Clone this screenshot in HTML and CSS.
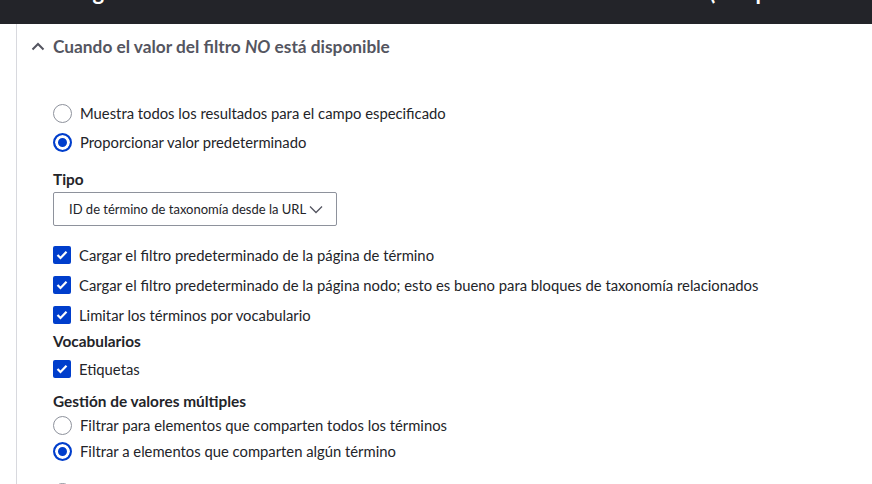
FILE: index.html
```html
<!DOCTYPE html>
<html lang="es">
<head>
<meta charset="utf-8">
<title>Filtro contextual</title>
<link rel="stylesheet" href="styles.css">
</head>
<body>
<header class="topbar">
  <div class="topbar-title">Configurar filtro contextual: Contenido: Tiene término de taxonomía (con profundidad) taxonomy_index_tid_depth (x)</div>
</header>
<main class="main">
  <section class="panel">
    <div class="summary">
      <svg class="chev-up" width="14" height="9" viewBox="0 0 14 9"><path d="M1.5 7.5 L7 2 L12.5 7.5" fill="none" stroke="#545560" stroke-width="2"/></svg>
      <span class="summary-text">Cuando el valor del filtro <em>NO</em> está disponible</span>
    </div>

    <div class="group radios-top">
      <label class="row"><span class="radio"></span><span>Muestra todos los resultados para el campo especificado</span></label>
      <label class="row"><span class="radio checked"></span><span>Proporcionar valor predeterminado</span></label>
    </div>

    <div class="label lbl-tipo">Tipo</div>
    <div class="select">
      <span>ID de término de taxonomía desde la URL</span>
      <svg class="chev-down" width="14" height="9" viewBox="0 0 14 9"><path d="M1 1.5 L7 7.5 L13 1.5" fill="none" stroke="#545560" stroke-width="1.3"/></svg>
    </div>

    <div class="group checks">
      <label class="row"><span class="checkbox"><svg width="12" height="10" viewBox="0 0 12 10"><path d="M1.5 5 L4.5 8 L10.5 1.8" fill="none" stroke="#fff" stroke-width="2.2"/></svg></span><span>Cargar el filtro predeterminado de la página de término</span></label>
      <label class="row"><span class="checkbox"><svg width="12" height="10" viewBox="0 0 12 10"><path d="M1.5 5 L4.5 8 L10.5 1.8" fill="none" stroke="#fff" stroke-width="2.2"/></svg></span><span>Cargar el filtro predeterminado de la página nodo; esto es bueno para bloques de taxonomía relacionados</span></label>
      <label class="row"><span class="checkbox"><svg width="12" height="10" viewBox="0 0 12 10"><path d="M1.5 5 L4.5 8 L10.5 1.8" fill="none" stroke="#fff" stroke-width="2.2"/></svg></span><span>Limitar los términos por vocabulario</span></label>
    </div>

    <div class="label lbl-vocab">Vocabularios</div>
    <div class="group vocab">
      <label class="row"><span class="checkbox"><svg width="12" height="10" viewBox="0 0 12 10"><path d="M1.5 5 L4.5 8 L10.5 1.8" fill="none" stroke="#fff" stroke-width="2.2"/></svg></span><span>Etiquetas</span></label>
    </div>

    <div class="label lbl-multi">Gestión de valores múltiples</div>
    <div class="group radios-multi">
      <label class="row"><span class="radio"></span><span>Filtrar para elementos que comparten todos los términos</span></label>
      <label class="row"><span class="radio checked"></span><span>Filtrar a elementos que comparten algún término</span></label>
    </div>

    <div class="group radios-next">
      <label class="row"><span class="radio"></span><span>Opción siguiente</span></label>
    </div>
  </section>
</main>
</body>
</html>
```
FILE: styles.css
```css
* { box-sizing: border-box; }
html, body { margin: 0; padding: 0; background: #fff; }
body {
  font-family: Lato, "Noto Sans", "Liberation Sans", sans-serif;
  font-size: 14.8px;
  color: #232429;
  overflow: hidden;
  height: 484px;
}
.topbar {
  height: 24px;
  background: #232429;
  overflow: hidden;
}
.topbar-title {
  color: #fff;
  font-size: 22px;
  font-weight: 700;
  line-height: 22px;
  margin-top: -19px;
  padding-left: 40px;
  white-space: nowrap;
}
.main { padding-left: 16px; }
.panel {
  border-left: 1px solid #d8d9de;
  padding-left: 36px;
  min-height: 460px;
  display: flex;
  flex-direction: column;
}
.summary {
  height: 44px;
  display: flex;
  align-items: center;
  margin-left: -22px;
  gap: 8px;
}
.chev-up { flex: none; }
.summary-text {
  font-size: 17.3px;
  font-weight: 700;
  color: #545560;
}
.summary-text em { font-weight: 700; }
.group { display: flex; flex-direction: column; }
.row {
  height: 24px;
  display: flex;
  align-items: center;
  gap: 8px;
}
.radios-top { margin-top: 33px; gap: 5px; }
.radio {
  flex: none;
  width: 19px;
  height: 19px;
  border-radius: 50%;
  border: 1px solid #8e929c;
  background: #fff;
}
.radio.checked {
  border: 2px solid #003ecc;
  background: #003ecc;
  box-shadow: inset 0 0 0 3px #fff;
}
.label {
  height: 20px;
  line-height: 20px;
  font-weight: 700;
  font-size: 15.4px;
}
.lbl-tipo { margin-top: 15px; }
.select {
  margin-top: 3px;
  width: 284px;
  height: 34px;
  border: 1px solid #8e929c;
  border-radius: 2px;
  display: flex;
  align-items: center;
  padding-left: 15px;
  font-size: 13px;
  gap: 3px;
}
.chev-down { flex: none; }
.checks { margin-top: 17px; gap: 6px; }
.checkbox {
  flex: none;
  width: 18px;
  height: 18px;
  border-radius: 2px;
  background: #003ecc;
  display: flex;
  align-items: center;
  justify-content: center;
}
.lbl-vocab { margin-top: 4px; }
.vocab { margin-top: 6px; }
.lbl-multi { margin-top: 10px; }
.radios-multi { margin-top: 2px; gap: 2px; }
.radios-next { margin-top: 17px; }
```
